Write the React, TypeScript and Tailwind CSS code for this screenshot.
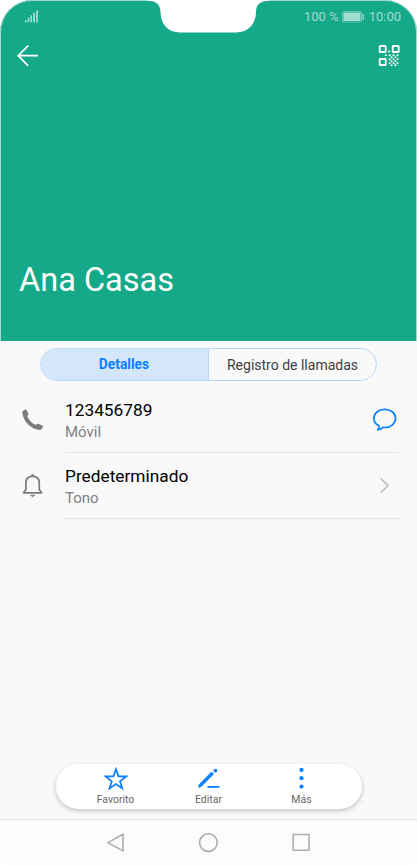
import type { ReactNode } from 'react';

const contactRows = [
  { id: 'phone', title: '123456789', label: 'Móvil', icon: <PhoneIcon />, action: <ChatIcon /> },
  { id: 'tone', title: 'Predeterminado', label: 'Tono', icon: <BellIcon />, action: <ChevronIcon /> },
];

const toolbarItems = [
  { id: 'favorite', name: 'Favorito', icon: <StarIcon /> },
  { id: 'edit', name: 'Editar', icon: <EditIcon /> },
  { id: 'more', name: 'Más', icon: <MoreIcon /> },
];

// x, y of the small dots in the lower right part of the QR icon
const qrDots = [
  [11.2, 6.5],
  [7.8, 10.3], [11.7, 10.3], [15.6, 10.3], [19.5, 10.3],
  [13.6, 12.3], [17.5, 12.3],
  [11.7, 14.3], [15.6, 14.3], [19.5, 14.3],
  [13.6, 16.3], [17.5, 16.3],
  [11.7, 18.3], [15.6, 18.3], [19.5, 18.3],
  [13.6, 20.2], [17.5, 20.2],
];

function SignalIcon() {
  return (
    <svg width="15" height="13" viewBox="0 0 15 13" fill="#fff" fillOpacity="0.6">
      <rect x="1" y="10.2" width="1.7" height="2.1" />
      <rect x="3.7" y="7.8" width="1.7" height="4.5" />
      <rect x="6.4" y="5.3" width="1.7" height="7" />
      <rect x="9.2" y="2.8" width="1.8" height="9.5" />
      <rect x="12.1" y="0.4" width="1.8" height="11.9" />
    </svg>
  );
}

function BatteryIcon() {
  return (
    <svg width="23" height="12" viewBox="0 0 23 12" fill="none">
      <rect x="0.5" y="0.5" width="19" height="10.5" rx="1" stroke="#fff" strokeOpacity="0.35" />
      <rect x="1.5" y="1.5" width="17" height="8.5" fill="#fff" fillOpacity="0.6" />
      <rect x="20.5" y="3" width="1.5" height="6" fill="#fff" fillOpacity="0.5" />
    </svg>
  );
}

function BackIcon() {
  return (
    <svg width="22" height="22" viewBox="0 0 22 22" fill="none" stroke="#fff" strokeWidth="1.7">
      <path d="M11.2 0.6 1.2 10.7l10 10.1M1.2 10.7H21" />
    </svg>
  );
}

function QrIcon() {
  return (
    <svg width="22" height="22" viewBox="0 0 22 22" fill="#fff">
      <g fill="none" stroke="#fff" strokeWidth="1.8">
        <rect x="1.7" y="1" width="6" height="6" rx="0.6" />
        <rect x="14.7" y="1" width="6" height="6" rx="0.6" />
        <rect x="1.7" y="14" width="6" height="6" rx="0.6" />
      </g>
      {qrDots.map(([x, y], index) => (
        <circle key={index} cx={x} cy={y} r="1.05" />
      ))}
    </svg>
  );
}

function PhoneIcon() {
  return (
    <svg width="22" height="22" viewBox="0 0 22 22" fill="#7b7b7b">
      <path d="M1.3 1.7 2.8.7c.8-.5 1.500-.3 1.900.5l1.400 3c.4.8.2 1.500-.3 2.200-.5.7-.5 1.200-.1 2 1.600 2.900 4.100 5.400 7 7 .8.400 1.300.4 2-.1.700-.5 1.400-.7 2.200-.3l3.200 1.500c.8.4 1 1.100.5 1.900l-1 1.500c-.6.9-1.500 1.200-2.700 1.100C9.200 19.900 1.900 13 .4 4.500.2 3.300.4 2.400 1.300 1.700Z" />
    </svg>
  );
}

function BellIcon() {
  return (
    <svg width="22" height="24" viewBox="0 0 22 24" fill="none" stroke="#7b7b7b" strokeWidth="1.7">
      <path d="M1.6 18.8H19.6L17.3 15.6V9C17.3 4.8 14.7 2.4 10.6 2.4S3.9 4.8 3.9 9V15.6Z" strokeLinejoin="round" />
      <path d="M9.2 2a1.45 1.4 0 0 1 2.9 0ZM8.5 21.2h4.3l-2.15 1.5Z" fill="#7b7b7b" strokeWidth="0.7" />
    </svg>
  );
}

function ChatIcon() {
  return (
    <svg width="24" height="24" viewBox="0 0 24 24" fill="none" stroke="#0a80ff" strokeWidth="1.7" strokeLinejoin="round">
      <path d="M11.6 1.4C5.4 1.4.8 5.4.8 10.3c0 3.2 2 6.1 5.2 7.5.2 1.6-.2 2.8-1.3 4 2.5-.2 4.1-1 5.5-2.4.5 0 1 .1 1.5.1 6.2 0 10.9-4.2 10.9-9.2S17.900 1.4 11.6 1.4Z" />
    </svg>
  );
}

function ChevronIcon() {
  return (
    <svg width="24" height="16" viewBox="0 0 24 16" fill="none" stroke="#c3c3c3" strokeWidth="1.7">
      <path d="m7.8.6 7.2 7-7.2 7" />
    </svg>
  );
}

function StarIcon() {
  return (
    <svg width="24" height="24" viewBox="0 0 24 24" fill="none" stroke="#0a80ff" strokeWidth="1.7">
      <path d="m11.9 2.1 2.5 7.2 7.9.1-6.3 4.8 2.3 7.300-6.4-4.400-6.4 4.400 2.300-7.300-6.300-4.800 7.900-.1Z" />
    </svg>
  );
}

function EditIcon() {
  return (
    <svg width="24" height="24" viewBox="0 0 24 24" fill="#0a80ff">
      <path d="m14.5 5 2.1 2.1L4.2 19.6 1.6 20.4 2.2 17.6Z" stroke="#0a80ff" strokeWidth="0.7" strokeLinejoin="round" />
      <circle cx="18.4" cy="3.6" r="1.9" />
      <rect x="10.5" y="19" width="11.8" height="1.8" />
    </svg>
  );
}

function MoreIcon() {
  return (
    <svg width="24" height="24" viewBox="0 0 24 24" fill="#0a80ff">
      <circle cx="11.5" cy="2.9" r="2.1" />
      <circle cx="11.5" cy="11.2" r="2.1" />
      <circle cx="11.5" cy="19.6" r="2.1" />
    </svg>
  );
}

function StatusBar() {
  return (
    <div className="flex h-[33px] justify-between pr-4 pl-6 text-[13px] leading-[15px] text-white/60">
      <div className="pt-[10px]">
        <SignalIcon />
      </div>
      <div className="flex items-center">
        <span>100 %</span>
        <span className="mr-1 ml-[3px]">
          <BatteryIcon />
        </span>
        <span>10:00</span>
      </div>
    </div>
  );
}

function Header(props: { name: string }) {
  return (
    <header className="relative h-[341px] rounded-t-[32px] bg-[#14a988]">
      <div className="pointer-events-none absolute inset-0 rounded-t-[32px] border border-b-0 border-white/60" />
      <svg className="absolute top-0 left-0" width="417" height="33" viewBox="0 0 417 33" fill="none">
        <path d="M148 0V.8C156 .8 160.5 5 160.5 12C160.5 24 168 32.5 180 32.5H236C248 32.5 256 24 256 12C256 5 260 .8 269 .8V0Z" fill="#fff" />
      </svg>
      <StatusBar />
      <div className="flex items-start justify-between pt-3 pr-[17px] pl-[17px]">
        <BackIcon />
        <QrIcon />
      </div>
      <h1 className="mt-[193px] pl-[19px] text-[32.5px] leading-10 font-normal text-white">{props.name}</h1>
    </header>
  );
}

function Tabs() {
  return (
    <div className="mx-auto mt-[7px] flex h-[33px] w-[337px] overflow-hidden rounded-full border border-[#b5d8fc] text-sm">
      <div className="flex w-[168px] items-center justify-center border-r border-[#b5d8fc] bg-[#d4e6fa] pr-px text-[13.8px] font-bold text-[#0a80ff]">
        Detalles
      </div>
      <div className="flex flex-1 items-center justify-center text-[#404040]">Registro de llamadas</div>
    </div>
  );
}

function ContactRow(props: { title: string; label: string; icon: ReactNode; action: ReactNode }) {
  return (
    <div className="flex h-[66px] pr-[18px] pl-[21.5px]">
      <div className="flex w-[43.5px] items-center">{props.icon}</div>
      <div className="flex flex-1 items-center justify-between border-b border-[#e2e2e2] pr-[2px]">
        <div className="pt-[3px]">
          <div className="text-[17.3px] leading-[22px] text-black">{props.title}</div>
          <div className="text-[15px] leading-[22px] text-[#808080]">{props.label}</div>
        </div>
        {props.action}
      </div>
    </div>
  );
}

function NavigationBar() {
  return (
    <nav className="flex h-[47px] items-center justify-center gap-[73px] rounded-b-[10px] border-t border-[#e4e4e4] bg-[#fcfcfc] pr-px pb-px">
      <svg width="20" height="20" viewBox="0 0 20 20" fill="none" stroke="#acacac" strokeWidth="1.6">
        <path d="M18 1.2V17.9L2.8 9.600Z" strokeLinejoin="round" />
      </svg>
      <svg width="20" height="20" viewBox="0 0 20 20" fill="none" stroke="#acacac" strokeWidth="1.6">
        <circle cx="10.4" cy="9.6" r="8.800" />
      </svg>
      <svg width="20" height="20" viewBox="0 0 20 20" fill="none" stroke="#acacac" strokeWidth="1.6">
        <rect x="2.2" y="1.5" width="15.8" height="15.8" rx="0.5" />
      </svg>
    </nav>
  );
}

export default function App() {
  return (
    <div className="h-[866px] w-[417px] bg-white font-['Roboto',sans-serif]">
      <main className="flex h-full flex-col rounded-t-[32px] rounded-b-[10px] bg-[#f9f9f9]">
        <Header name="Ana Casas" />
        <Tabs />
        <div className="mt-[6px]">
          {contactRows.map((row) => (
            <ContactRow key={row.id} title={row.title} label={row.label} icon={row.icon} action={row.action} />
          ))}
        </div>
        <div className="mx-auto mt-auto mb-[10px] flex h-[45px] w-[306px] justify-center rounded-full bg-white shadow-[0_2px_5px_rgba(0,0,0,0.22)]">
          {toolbarItems.map((item) => (
            <div className="flex w-[93px] flex-col items-center pt-[3px]" key={item.id}>
              {item.icon}
              <span className="mt-[2px] text-[10.5px] leading-[14px] text-[#666]">{item.name}</span>
            </div>
          ))}
        </div>
        <NavigationBar />
      </main>
    </div>
  );
}
